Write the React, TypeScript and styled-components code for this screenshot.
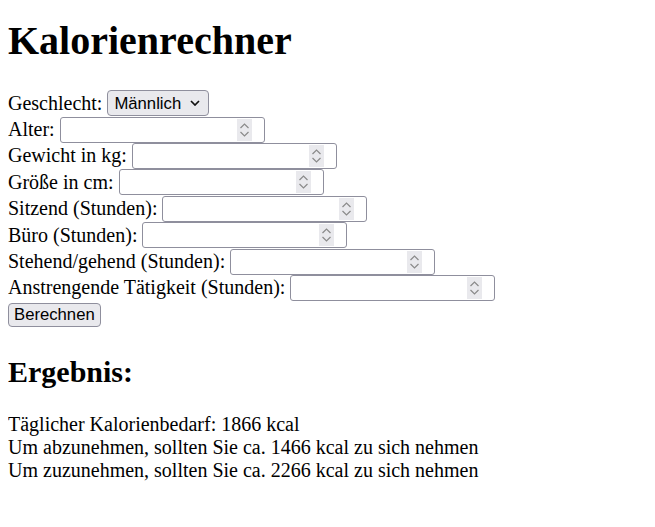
import { useState } from 'react';
import styled, { createGlobalStyle } from 'styled-components';

const GlobalStyle = createGlobalStyle`
  body {
    margin: 8px;
    font-family: "Liberation Serif", "Times New Roman", serif;
    font-size: 20px;
    color: #000;
    background: #fff;
  }
`;

const Title = styled.h1`
  font-size: 40px;
  line-height: 46px;
  margin: 10px 0 26px;
`;

const SubTitle = styled.h2`
  font-size: 30px;
  line-height: 34px;
  margin: 28px 0 24px;
`;

const Form = styled.form`
  margin: 0;
`;

const Row = styled.label`
  display: flex;
  align-items: center;
  gap: 5px;
  height: 26.4px;
`;

const Select = styled.select`
  appearance: none;
  height: 26px;
  box-sizing: border-box;
  padding: 0 27px 0 6px;
  font-family: "Liberation Sans", Arial, sans-serif;
  font-size: 16.7px;
  color: #000;
  background: #e9e9ed;
  border: 1px solid #8f8f9d;
  border-radius: 4px;
`;

const SelectWrap = styled.span`
  position: relative;
  display: inline-flex;
  align-items: center;

  svg {
    position: absolute;
    right: 9px;
    pointer-events: none;
  }
`;

const NumberBox = styled.span`
  display: inline-flex;
  align-items: center;
  box-sizing: border-box;
  width: 205px;
  height: 26px;
  padding: 0 12px 0 3px;
  background: #fff;
  border: 1px solid #8f8f9d;
  border-radius: 3px;
`;

const NumberInput = styled.input`
  flex: 1;
  min-width: 0;
  border: none;
  outline: none;
  padding: 0;
  font-family: "Liberation Sans", Arial, sans-serif;
  font-size: 16.7px;
  background: transparent;
  appearance: textfield;
  -moz-appearance: textfield;

  &::-webkit-inner-spin-button,
  &::-webkit-outer-spin-button {
    -webkit-appearance: none;
    margin: 0;
  }
`;

const Spinner = styled.span`
  display: flex;
  align-items: center;
  justify-content: center;
  width: 15px;
  height: 22px;
  background: #e9e9ed;
`;

const Button = styled.button`
  margin-top: 2px;
  height: 24px;
  box-sizing: border-box;
  padding: 0 5px;
  font-family: "Liberation Sans", Arial, sans-serif;
  font-size: 16.7px;
  color: #000;
  background: #e9e9ed;
  border: 1px solid #8f8f9d;
  border-radius: 4px;
`;

const ResultText = styled.p`
  margin: 0;
  line-height: 23px;
`;

const FIELDS = [
  'Alter',
  'Gewicht in kg',
  'Größe in cm',
  'Sitzend (Stunden)',
  'Büro (Stunden)',
  'Stehend/gehend (Stunden)',
  'Anstrengende Tätigkeit (Stunden)',
];

const Chevron = () => (
  <svg width="10" height="6" viewBox="0 0 10 6">
    <path d="M1 1l4 4 4-4" fill="none" stroke="#111" strokeWidth="1.7" />
  </svg>
);

const SpinIcon = () => (
  <svg width="11" height="16" viewBox="0 0 11 16">
    <path d="M1.5 6l4-4 4 4M1.5 10l4 4 4-4" fill="none" stroke="#8a8a8a" strokeWidth="1.2" />
  </svg>
);

const App = () => {
  const [gender, setGender] = useState('m');
  const [values, setValues] = useState<Record<string, string>>({});

  return (
    <>
      <GlobalStyle />
      <Title>Kalorienrechner</Title>
      <Form onSubmit={(e) => e.preventDefault()}>
        <Row>
          Geschlecht:
          <SelectWrap>
            <Select value={gender} onChange={(e) => setGender(e.target.value)}>
              <option value="m">Männlich</option>
              <option value="w">Weiblich</option>
            </Select>
            <Chevron />
          </SelectWrap>
        </Row>
        {FIELDS.map((f) => (
          <Row key={f}>
            {f}:
            <NumberBox>
              <NumberInput
                type="number"
                value={values[f] ?? ''}
                onChange={(e) => setValues({ ...values, [f]: e.target.value })}
              />
              <Spinner>
                <SpinIcon />
              </Spinner>
            </NumberBox>
          </Row>
        ))}
        <Button type="submit">Berechnen</Button>
      </Form>
      <SubTitle>Ergebnis:</SubTitle>
      <ResultText>
        Täglicher Kalorienbedarf: 1866 kcal
        <br />
        Um abzunehmen, sollten Sie ca. 1466 kcal zu sich nehmen
        <br />
        Um zuzunehmen, sollten Sie ca. 2266 kcal zu sich nehmen
      </ResultText>
    </>
  );
};

export default App;
